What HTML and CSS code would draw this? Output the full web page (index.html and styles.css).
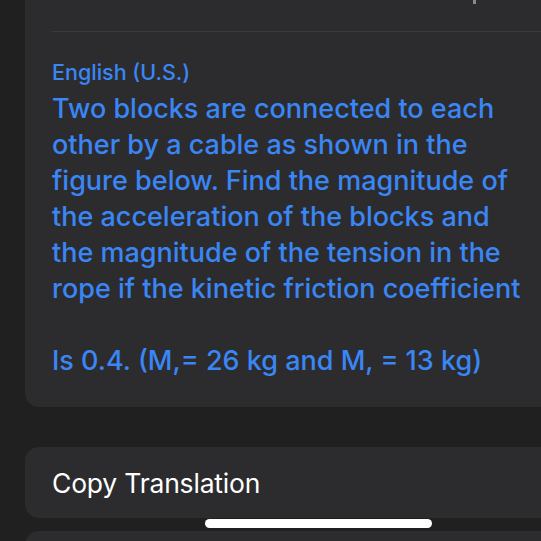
FILE: index.html
```html
<!DOCTYPE html>
<html>
<head>
<meta charset="utf-8">
<link rel="stylesheet" href="styles.css">
</head>
<body>
<div class="screen">
  <div class="card main">
    <div class="top"><span class="tick"></span></div>
    <div class="sep"></div>
    <div class="content">
      <div class="lang">English (U.S.)</div>
      <p class="trans">Two blocks are connected to each<br>other by a cable as shown in the<br>figure below. Find the magnitude of<br>the acceleration of the blocks and<br>the magnitude of the tension in the<br>rope if the kinetic friction coefficient</p>
      <p class="trans second">Is 0.4. (M,= 26 kg and M, = 13 kg)</p>
    </div>
  </div>
  <div class="card button">Copy Translation</div>
  <div class="card next"></div>
  <div class="home"></div>
</div>
</body>
</html>
```
FILE: styles.css
```css
html, body {
  margin: 0;
  padding: 0;
  background: #202020;
}
.screen {
  position: relative;
  width: 541px;
  height: 541px;
  overflow: hidden;
  padding-left: 25px;
  box-sizing: border-box;
  font-family: Inter, "Open Sans", sans-serif;
}
.card {
  background: #2c2c2e;
  border-radius: 14px 0 0 14px;
}
.main {
  border-top-left-radius: 0;
  height: 407px;
  box-sizing: border-box;
}
.top {
  position: relative;
  height: 31px;
}
.tick {
  position: absolute;
  left: 448px;
  top: 0;
  width: 3px;
  height: 4px;
  background: #8a8a8e;
}
.sep {
  margin-left: 27px;
  height: 1px;
  background: #3a3a3c;
}
.content {
  padding: 26px 0 0 27px;
}
.lang {
  color: #3a86f4;
  font-size: 21.5px;
  font-weight: 500;
  line-height: 28px;
  letter-spacing: 0;
}
.trans {
  margin: 5px 0 0;
  color: #3a86f4;
  font-size: 27px;
  font-weight: 500;
  line-height: 36px;
  letter-spacing: 0;
  white-space: nowrap;
}
.second {
  margin-top: 36px;
}
.button {
  margin-top: 40px;
  height: 71px;
  display: flex;
  align-items: center;
  padding-left: 27px;
  color: #ffffff;
  font-size: 26.5px;
  letter-spacing: -0.2px;
}
.next {
  margin-top: 13px;
  height: 40px;
}
.home {
  position: absolute;
  left: 205px;
  top: 519px;
  width: 227px;
  height: 9px;
  border-radius: 4.5px;
  background: #ffffff;
}
```
